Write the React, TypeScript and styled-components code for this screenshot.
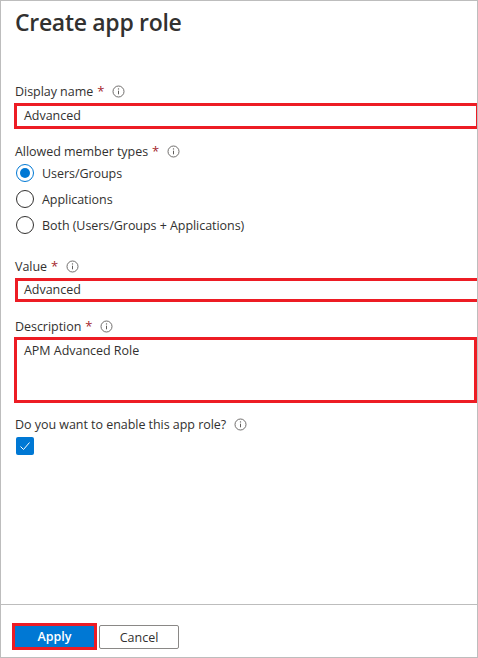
import React from "react";
import styled, { createGlobalStyle } from "styled-components";

const GlobalStyle = createGlobalStyle`
  html, body {
    margin: 0;
    padding: 0;
    background: #fff;
  }
  body {
    font-family: "Open Sans", "Noto Sans", "Liberation Sans", sans-serif;
    color: #323130;
  }
`;

const Panel = styled.div`
  box-sizing: border-box;
  width: 478px;
  height: 658px;
  border: 1px solid #bdbdbd;
  display: flex;
  flex-direction: column;
  overflow: hidden;
`;

const Body = styled.div`
  flex: 1;
  display: flex;
  flex-direction: column;
  padding: 6px 0 0 13px;
`;

const Title = styled.h1`
  margin: 0 0 45px 1px;
  font-size: 23px;
  line-height: 30px;
  font-weight: 600;
  letter-spacing: -0.3px;
  color: #323130;
`;

const Field = styled.div<{ $gap: number }>`
  display: flex;
  flex-direction: column;
  margin-bottom: ${(p) => p.$gap}px;
`;

const Label = styled.div<{ $below?: number }>`
  display: flex;
  align-items: center;
  height: 18px;
  margin-bottom: ${(p) => p.$below ?? 0}px;
  padding-left: 1px;
  font-size: 12.5px;
  letter-spacing: -0.04px;
  white-space: nowrap;
`;

const Star = styled.span`
  color: #a4262c;
  margin-left: 4px;
  font-size: 13px;
`;

const InfoIcon = styled.svg`
  width: 13px;
  height: 13px;
  margin-left: 8px;
  flex: none;
`;

const Input = styled.div<{ $height: number; $openRight?: boolean; $inset?: number }>`
  box-sizing: border-box;
  height: ${(p) => p.$height}px;
  margin-left: ${(p) => p.$inset ?? 0}px;
  border: 3px solid #ed1c24;
  border-right-width: ${(p) => (p.$openRight ? 0 : 1)}px;
  padding-left: ${(p) => 7 - (p.$inset ?? 0)}px;
  font-size: 12.5px;
  line-height: ${(p) => p.$height - 6}px;
  letter-spacing: -0.03px;
  white-space: nowrap;
`;

const TextArea = styled(Input)`
  border-right-width: 3px;
  padding-top: 1px;
  line-height: 20px;
`;

const RadioGroup = styled.div`
  display: flex;
  flex-direction: column;
  gap: 8px;
  margin-top: 4px;
  padding-left: 2px;
`;

const RadioRow = styled.div`
  display: flex;
  align-items: center;
  gap: 8px;
  height: 18px;
  font-size: 12.5px;
  letter-spacing: -0.05px;
`;

const RadioMark = styled.span<{ $checked?: boolean }>`
  box-sizing: border-box;
  width: 18px;
  height: 18px;
  border-radius: 50%;
  border: 1px solid ${(p) => (p.$checked ? "#0078d4" : "#323130")};
  display: flex;
  align-items: center;
  justify-content: center;
  &::after {
    content: "";
    display: ${(p) => (p.$checked ? "block" : "none")};
    width: 10px;
    height: 10px;
    border-radius: 50%;
    background: #0078d4;
  }
`;

const CheckBox = styled.span`
  width: 18px;
  height: 18px;
  margin: 4px 0 0 2px;
  border-radius: 2px;
  background: #0078d4;
  display: flex;
  align-items: center;
  justify-content: center;
`;

const Footer = styled.div`
  border-top: 1px solid #bdbdbd;
  height: 53px;
  box-sizing: border-box;
  display: flex;
  align-items: flex-start;
  gap: 2px;
  padding: 18px 0 0 11px;
`;

const ApplyOutline = styled.div`
  border: 3px solid #ed1c24;
  display: flex;
`;

const ApplyButton = styled.button`
  width: 79px;
  height: 21px;
  border: 0;
  padding: 0;
  background: #0078d4;
  color: #fff;
  font: 600 12.5px "Open Sans", sans-serif;
`;

const CancelButton = styled.button`
  width: 80px;
  height: 24px;
  margin-top: 2px;
  box-sizing: border-box;
  border: 1px solid #8a8886;
  border-radius: 2px;
  padding: 0;
  background: #fff;
  color: #323130;
  font: 500 12.5px "Open Sans", sans-serif;
`;

const Info = () => (
  <InfoIcon viewBox="0 0 13 13" fill="none">
    <circle cx="6.5" cy="6.5" r="5.5" stroke="#605e5c" strokeWidth="0.9" />
    <path d="M6.5 5.7v3.6" stroke="#605e5c" strokeWidth="1" />
    <circle cx="6.5" cy="3.9" r="0.7" fill="#605e5c" />
  </InfoIcon>
);

const App = () => {
  return (
    <Panel>
      <GlobalStyle />
      <Body>
        <Title>Create app role</Title>
        <Field $gap={13}>
          <Label $below={3}>
            Display name<Star>*</Star>
            <Info />
          </Label>
          <Input $height={26} $inset={0}>
            Advanced
          </Input>
        </Field>
        <Field $gap={23}>
          <Label>
            Allowed member types<Star>*</Star>
            <Info />
          </Label>
          <RadioGroup>
            <RadioRow>
              <RadioMark $checked />
              Users/Groups
            </RadioRow>
            <RadioRow>
              <RadioMark />
              Applications
            </RadioRow>
            <RadioRow>
              <RadioMark />
              Both (Users/Groups + Applications)
            </RadioRow>
          </RadioGroup>
        </Field>
        <Field $gap={15}>
          <Label $below={3}>
            Value<Star>*</Star>
            <Info />
          </Label>
          <Input $height={24} $inset={1} $openRight>
            Advanced
          </Input>
        </Field>
        <Field $gap={12}>
          <Label $below={2}>
            Description<Star>*</Star>
            <Info />
          </Label>
          <TextArea $height={66}>APM Advanced Role</TextArea>
        </Field>
        <Field $gap={0}>
          <Label>
            Do you want to enable this app role?
            <Info />
          </Label>
          <CheckBox>
            <svg width="12" height="12" viewBox="0 0 12 12" fill="none">
              <path d="M1.5 6.5l3 3 6-7" stroke="#fff" strokeWidth="1" />
            </svg>
          </CheckBox>
        </Field>
      </Body>
      <Footer>
        <ApplyOutline>
          <ApplyButton>Apply</ApplyButton>
        </ApplyOutline>
        <CancelButton>Cancel</CancelButton>
      </Footer>
    </Panel>
  );
};

export default App;
